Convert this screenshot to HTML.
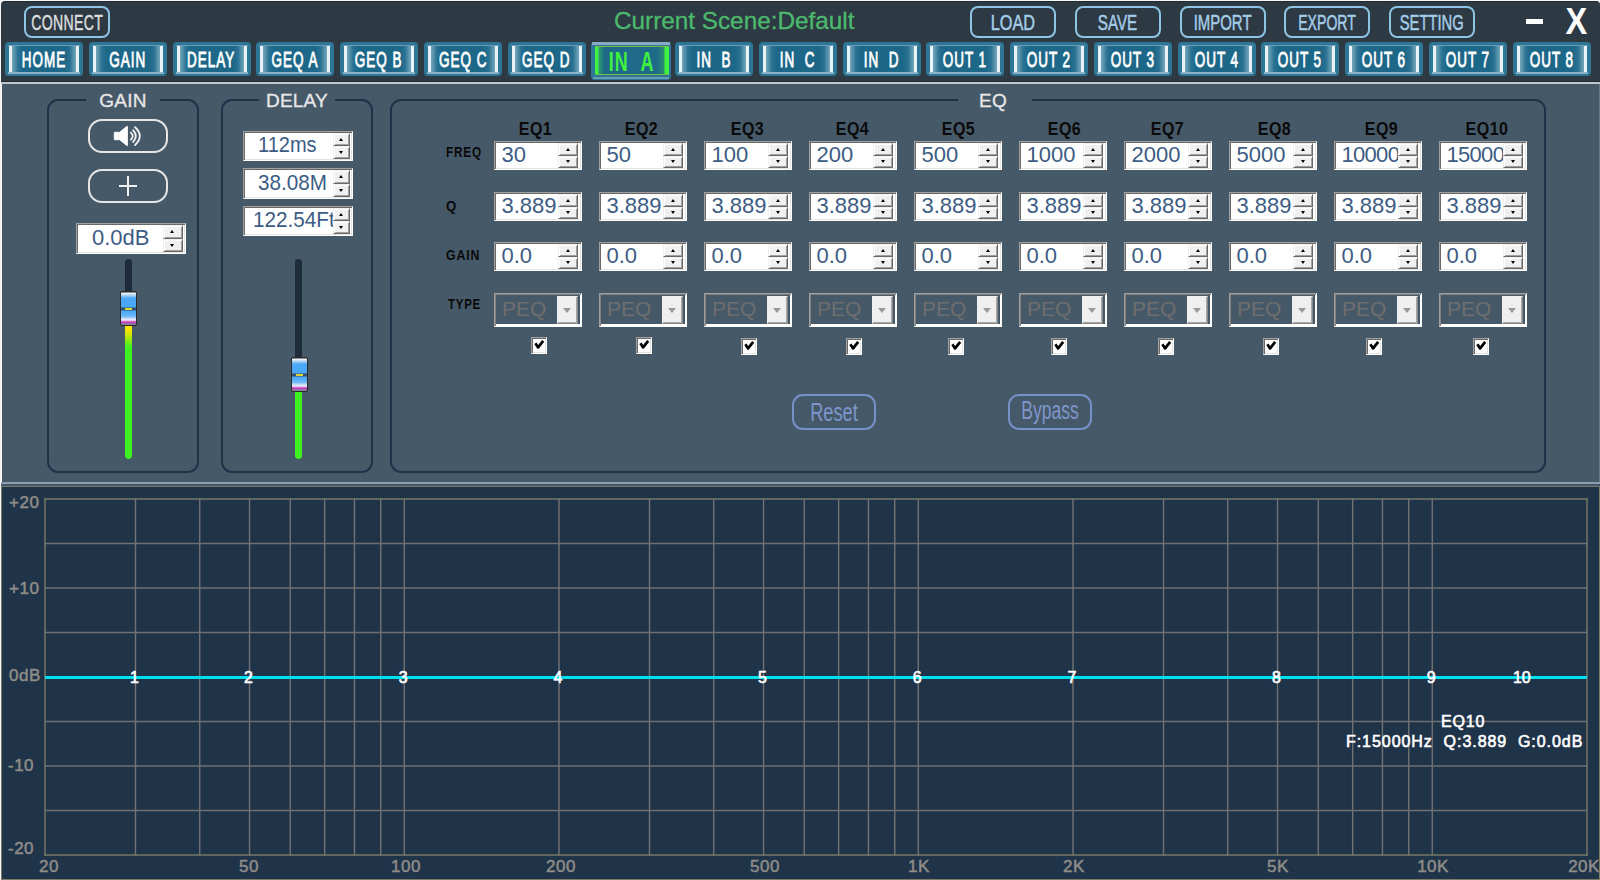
<!DOCTYPE html><html><head><meta charset="utf-8"><style>
*{margin:0;padding:0;box-sizing:border-box}
html,body{width:1600px;height:880px;overflow:hidden;background:#f6f6f6;font-family:"Liberation Sans",sans-serif}
.abs{position:absolute}
#top{position:absolute;left:1px;top:1px;width:1599px;height:81px;background:#2d3943;border-top-left-radius:4px;border-top-right-radius:4px;border-top:1px solid #1f2a33;border-bottom:1px solid #1f2a33}
#sep1{position:absolute;left:1px;top:82px;width:1599px;height:2px;background:#c3c8cc}
#panel{position:absolute;left:2px;top:84px;width:1598px;height:398px;background:#465969;border-right:1px solid #65798a}
#sep2{position:absolute;left:1px;top:482px;width:1599px;height:2px;background:#8e9eac}
#sep3{position:absolute;left:1px;top:484px;width:1599px;height:2px;background:#44566a}
#graph{position:absolute;left:1px;top:486px;width:1599px;height:394px;background:#1f3349;border:1px solid #7a7c68}
.fc{display:flex;justify-content:center;align-items:center;white-space:nowrap}
.sx{display:inline-block;transform-origin:center}
.obtn{position:absolute;top:6px;height:32px;width:86px;border:2px solid #8ec4e4;border-radius:8px;color:#a4cde8;font-size:22px;-webkit-text-stroke:0.5px currentColor}
.tab{position:absolute;top:42px;width:78px;height:34px;border-radius:4px;background:#2e7696;}
.tab .in{position:absolute;left:4px;top:4px;right:4px;bottom:4px;
 background:linear-gradient(to right,#e8f2f6 0,#e8f2f6 2.5px,#78a8bc 3px,#2a7293 9px,#1d6788 14px,#1d6788 calc(100% - 14px),#2a7293 calc(100% - 9px),#78a8bc calc(100% - 3px),#e8f2f6 calc(100% - 2.5px),#e8f2f6 100%);}
.tab .tl{position:absolute;left:3px;right:3px;top:2.5px;height:1.5px;background:#6b9bb7}
.tab .bl{position:absolute;left:3px;right:3px;bottom:2px;height:2px;background:#8cb2c9}
.tab .tx{position:absolute;left:0;right:0;top:1.5px;bottom:0;color:#fff;font-size:22.5px;-webkit-text-stroke:0.9px currentColor;letter-spacing:1.6px}
.tab.act{background:#2e7696;height:38.5px;width:79.5px;top:41.6px}
.tab.act .in{left:3.3px;top:4.8px;right:1.8px;bottom:4.8px;background:linear-gradient(to right,#40f040 0,#40f040 2.5px,#2c9a6c 4.5px,#1e6a88 9px,#1e6a88 calc(100% - 12px),#2a8a70 calc(100% - 5.5px),#40f040 calc(100% - 3.5px),#40f040 100%);box-shadow:inset 0 1px 0 #78b848, inset 0 -1px 0 #78b848}
.tab.act .atl{position:absolute;left:1px;right:1px;top:0.6px;height:2.7px;background:#88aac4}
.tab.act .abl{position:absolute;left:2px;right:2px;top:35.4px;height:1.8px;background:#6a9ab5}
.tab.act .tx{color:#40f040;font-size:28px;left:2px;font-weight:bold;-webkit-text-stroke:0;letter-spacing:1.5px}
.grp{position:absolute;border:2px solid #1d3349;border-radius:11px}
.gt{position:absolute;color:#e8e8e8;font-size:19px;line-height:20px;background:#465969;text-align:center;letter-spacing:0.2px;-webkit-text-stroke:0.3px #e8e8e8}
.spin{position:absolute;background:#fff;border:1px solid;border-color:#a0a0a0 #fff #fff #a0a0a0;box-shadow:inset 1px 1px 0 #696969, inset -1px -1px 0 #e3e3e3;overflow:hidden}
.spin .v{position:absolute;top:-1px;bottom:0;color:#3c5c84;font-size:22px;white-space:nowrap}
.spin .ar{position:absolute;right:3px;width:20px;background:#f0f0f0;border:1px solid;border-color:#f0f0f0 #696969 #696969 #f0f0f0;box-shadow:inset 1px 1px 0 #fff, inset -1px -1px 0 #a0a0a0}
.spin .ar i{position:absolute;left:50%;top:50%;margin-left:-2.5px;width:0;height:0;border-left:2.5px solid transparent;border-right:2.5px solid transparent}
.spin .ar.u i{border-bottom:3px solid #000;margin-top:-1.5px}
.spin .ar.d i{border-top:3px solid #000;margin-top:-1.5px}
.lbl{position:absolute;color:#0a0a0a;font-weight:bold;font-size:14.7px;white-space:nowrap}
.eqh{position:absolute;color:#0a0a0a;font-weight:bold;font-size:18.6px;width:87px}
.wbtn{position:absolute;border:2px solid #e6e6e6;border-radius:14px}
.cb{position:absolute;width:16px;height:17px;background:#fff;border:1px solid;border-color:#a0a0a0 #fff #fff #a0a0a0;box-shadow:inset 1px 1px 0 #696969, inset -1px -1px 0 #e3e3e3}
.gl{position:absolute;background:#77766c}
.axl{position:absolute;color:#8e8c88;font-size:17px;white-space:nowrap;line-height:17px;-webkit-text-stroke:0.5px #8e8c88;letter-spacing:0.5px}
.mk{position:absolute;color:#fff;font-size:16px;line-height:16px;-webkit-text-stroke:0.6px #fff}
.thumb{position:absolute;width:17px;height:35px;border:1px solid #2a2a2a;border-radius:2px;background:linear-gradient(#2a2a2a 0,#2a2a2a 0px,#f4f8fb 1px,#9cc8f0 4px,#4aa8f8 6px,#4aa8f8 15px,#38506a 16px,#38506a 18px,#4aa8f8 19px,#6ab8f8 24px,#f8f0f8 28px,#c040c0 30px,#c040c0 31px,#808890 32px)}
.thumb i{position:absolute;left:4px;top:16px;width:7px;height:2px;background:#e0d830}
</style></head><body>

<div id="top"></div><div id="sep1"></div><div id="panel"></div><div id="sep2"></div><div id="sep3"></div><div id="graph"></div>
<div class="obtn fc" style="left:24px;width:86px;color:#dedede"><span class="sx" style="transform:scaleX(0.64);margin-top:1px;letter-spacing:0.5px">CONNECT</span></div>
<div class="obtn fc" style="left:970.0px"><span class="sx" style="transform:scaleX(0.74);margin-top:1px">LOAD</span></div>
<div class="obtn fc" style="left:1074.8px"><span class="sx" style="transform:scaleX(0.69);margin-top:1px">SAVE</span></div>
<div class="obtn fc" style="left:1179.5px"><span class="sx" style="transform:scaleX(0.68);margin-top:1px">IMPORT</span></div>
<div class="obtn fc" style="left:1284.2px"><span class="sx" style="transform:scaleX(0.64);margin-top:1px">EXPORT</span></div>
<div class="obtn fc" style="left:1389.0px"><span class="sx" style="transform:scaleX(0.67);margin-top:1px">SETTING</span></div>
<div class="abs" style="left:614px;top:7.2px;color:#4cba6c;font-size:24.3px;white-space:nowrap;-webkit-text-stroke:0.3px #4cba6c">Current Scene:Default</div>
<div class="abs" style="left:1526px;top:19px;width:17px;height:5px;background:#fff"></div>
<div class="abs fc" style="left:1556px;top:1px;width:40px;height:42px;color:#fff;font-weight:bold;font-size:37px"><span class="sx" style="transform:scaleX(0.88);margin-left:0px">X</span></div>
<div class="tab" style="left:5.00px"><div class="in"></div><div class="tl"></div><div class="bl"></div><div class="tx fc"><span class="sx" style="transform:scaleX(0.6)">HOME</span></div></div>
<div class="tab" style="left:88.75px"><div class="in"></div><div class="tl"></div><div class="bl"></div><div class="tx fc"><span class="sx" style="transform:scaleX(0.6)">GAIN</span></div></div>
<div class="tab" style="left:172.50px"><div class="in"></div><div class="tl"></div><div class="bl"></div><div class="tx fc"><span class="sx" style="transform:scaleX(0.6)">DELAY</span></div></div>
<div class="tab" style="left:256.25px"><div class="in"></div><div class="tl"></div><div class="bl"></div><div class="tx fc"><span class="sx" style="transform:scaleX(0.6)">GEQ A</span></div></div>
<div class="tab" style="left:340.00px"><div class="in"></div><div class="tl"></div><div class="bl"></div><div class="tx fc"><span class="sx" style="transform:scaleX(0.6)">GEQ B</span></div></div>
<div class="tab" style="left:423.75px"><div class="in"></div><div class="tl"></div><div class="bl"></div><div class="tx fc"><span class="sx" style="transform:scaleX(0.6)">GEQ C</span></div></div>
<div class="tab" style="left:507.50px"><div class="in"></div><div class="tl"></div><div class="bl"></div><div class="tx fc"><span class="sx" style="transform:scaleX(0.6)">GEQ D</span></div></div>
<div class="tab act" style="left:591.25px"><div class="in"></div><div class="atl"></div><div class="abl"></div><div class="tx fc"><span class="sx" style="transform:scaleX(0.64)">IN&nbsp;&nbsp;A</span></div></div>
<div class="tab" style="left:675.00px"><div class="in"></div><div class="tl"></div><div class="bl"></div><div class="tx fc"><span class="sx" style="transform:scaleX(0.6)">IN&nbsp;&nbsp;B</span></div></div>
<div class="tab" style="left:758.75px"><div class="in"></div><div class="tl"></div><div class="bl"></div><div class="tx fc"><span class="sx" style="transform:scaleX(0.6)">IN&nbsp;&nbsp;C</span></div></div>
<div class="tab" style="left:842.50px"><div class="in"></div><div class="tl"></div><div class="bl"></div><div class="tx fc"><span class="sx" style="transform:scaleX(0.6)">IN&nbsp;&nbsp;D</span></div></div>
<div class="tab" style="left:926.25px"><div class="in"></div><div class="tl"></div><div class="bl"></div><div class="tx fc"><span class="sx" style="transform:scaleX(0.6)">OUT 1</span></div></div>
<div class="tab" style="left:1010.00px"><div class="in"></div><div class="tl"></div><div class="bl"></div><div class="tx fc"><span class="sx" style="transform:scaleX(0.6)">OUT 2</span></div></div>
<div class="tab" style="left:1093.75px"><div class="in"></div><div class="tl"></div><div class="bl"></div><div class="tx fc"><span class="sx" style="transform:scaleX(0.6)">OUT 3</span></div></div>
<div class="tab" style="left:1177.50px"><div class="in"></div><div class="tl"></div><div class="bl"></div><div class="tx fc"><span class="sx" style="transform:scaleX(0.6)">OUT 4</span></div></div>
<div class="tab" style="left:1261.25px"><div class="in"></div><div class="tl"></div><div class="bl"></div><div class="tx fc"><span class="sx" style="transform:scaleX(0.6)">OUT 5</span></div></div>
<div class="tab" style="left:1345.00px"><div class="in"></div><div class="tl"></div><div class="bl"></div><div class="tx fc"><span class="sx" style="transform:scaleX(0.6)">OUT 6</span></div></div>
<div class="tab" style="left:1428.75px"><div class="in"></div><div class="tl"></div><div class="bl"></div><div class="tx fc"><span class="sx" style="transform:scaleX(0.6)">OUT 7</span></div></div>
<div class="tab" style="left:1512.50px"><div class="in"></div><div class="tl"></div><div class="bl"></div><div class="tx fc"><span class="sx" style="transform:scaleX(0.6)">OUT 8</span></div></div>
<div class="grp" style="left:47.4px;top:99px;width:151.6px;height:374px"></div>
<div class="gt" style="left:86px;top:90.5px;width:74px">GAIN</div>
<div class="grp" style="left:221px;top:99px;width:152px;height:374px"></div>
<div class="gt" style="left:259px;top:90.5px;width:76px">DELAY</div>
<div class="grp" style="left:390px;top:99px;width:1156px;height:374px"></div>
<div class="gt" style="left:958px;top:90.5px;width:74px;text-indent:-4px">EQ</div>
<div class="wbtn" style="left:88px;top:119px;width:80px;height:34px"></div>
<svg class="abs" style="left:105px;top:120px" width="45" height="32" viewBox="0 0 45 32"><path d="M9.3 12.3H14.6L21.9 6.3Q22.4 6 22.4 6.8V25.2Q22.4 26 21.9 25.6L14.6 19.7H9.3Z" fill="#fff" stroke="#fff" stroke-width="0.9" stroke-linejoin="round"/><path d="M25.9 12.6Q29.5 16 25.9 19.6M28.1 10.2Q33.5 16 28.1 21.9M30.1 7.2Q39.5 16 30.1 25" stroke="#eef0f2" stroke-width="1.9" fill="none" stroke-linecap="round"/></svg>
<div class="wbtn" style="left:88px;top:169px;width:80px;height:34px"></div>
<div class="abs" style="left:118.5px;top:185px;width:18.5px;height:2.2px;background:#f0f0f0"></div><div class="abs" style="left:126.8px;top:176px;width:2.2px;height:20px;background:#f0f0f0"></div>
<div class="spin" style="left:76px;top:223px;width:110px;height:31px"><div class="v" style="left:15px;line-height:29px">0.0dB</div><div class="ar u" style="top:1px;height:13.5px;width:19.5px;right:2.5px"><i></i></div><div class="ar d" style="top:14.5px;height:13.5px;width:19.5px;right:2.5px"><i></i></div></div>
<div class="spin" style="left:243px;top:131px;width:110px;height:30px"><div class="v" style="left:14px;line-height:28px;transform:scaleX(0.91);transform-origin:left">112ms</div><div class="ar u" style="top:1px;height:13.0px;width:17.5px;right:2px"><i></i></div><div class="ar d" style="top:14.0px;height:13.0px;width:17.5px;right:2px"><i></i></div></div>
<div class="spin" style="left:243px;top:168px;width:110px;height:31px"><div class="v" style="left:14px;line-height:29px;transform:scaleX(0.94);transform-origin:left">38.08M</div><div class="ar u" style="top:1px;height:13.5px;width:17.5px;right:2px"><i></i></div><div class="ar d" style="top:14.5px;height:13.5px;width:17.5px;right:2px"><i></i></div></div>
<div class="spin" style="left:243px;top:206px;width:110px;height:30px"><div class="v" style="left:9px;line-height:28px;transform:scaleX(0.94);transform-origin:left">122.54Ft</div><div class="ar u" style="top:1px;height:13.0px;width:17.5px;right:2px"><i></i></div><div class="ar d" style="top:14.0px;height:13.0px;width:17.5px;right:2px"><i></i></div></div>
<div class="abs" style="left:125px;top:259px;width:7px;height:200px;background:#1e2b3a;border-radius:3.5px"></div>
<div class="abs" style="left:125px;top:325px;width:7px;height:134px;background:linear-gradient(#f8e400 0,#f8e400 6px,#40f020 22px,#40f020);border-radius:0 0 3.5px 3.5px"></div>
<div class="thumb" style="left:120px;top:291px"><i></i></div>
<div class="abs" style="left:295px;top:259px;width:7px;height:200px;background:#1e2b3a;border-radius:3.5px"></div>
<div class="abs" style="left:295px;top:390px;width:7px;height:69px;background:#40f020;border-radius:0 0 3.5px 3.5px"></div>
<div class="thumb" style="left:291px;top:357px"><i></i></div>
<div class="lbl" style="left:445.5px;top:144px"><span class="sx" style="transform:scaleX(0.8);transform-origin:left;letter-spacing:1px">FREQ</span></div>
<div class="lbl" style="left:445.5px;top:198px"><span class="sx" style="transform:scaleX(0.9);transform-origin:left;letter-spacing:1px">Q</span></div>
<div class="lbl" style="left:445.5px;top:246.5px"><span class="sx" style="transform:scaleX(0.84);transform-origin:left;letter-spacing:1px">GAIN</span></div>
<div class="lbl" style="left:447.5px;top:295.5px"><span class="sx" style="transform:scaleX(0.78);transform-origin:left;letter-spacing:1px">TYPE</span></div>
<div class="eqh fc" style="left:492.5px;top:119px;height:20px"><span class="sx" style="transform:scaleX(0.86);letter-spacing:0.6px">EQ1</span></div>
<div class="spin" style="left:494px;top:141px;width:88px;height:29px"><div class="v" style="left:6.5px;line-height:27px">30</div><div class="ar u" style="top:1px;height:12.5px;width:20px;right:3px"><i></i></div><div class="ar d" style="top:13.5px;height:12.5px;width:20px;right:3px"><i></i></div></div>
<div class="spin" style="left:494px;top:192px;width:88px;height:29px"><div class="v" style="left:6.5px;line-height:27px">3.889</div><div class="ar u" style="top:1px;height:12.5px;width:20px;right:3px"><i></i></div><div class="ar d" style="top:13.5px;height:12.5px;width:20px;right:3px"><i></i></div></div>
<div class="spin" style="left:494px;top:242px;width:88px;height:29px"><div class="v" style="left:6.5px;line-height:27px">0.0</div><div class="ar u" style="top:1px;height:12.5px;width:20px;right:3px"><i></i></div><div class="ar d" style="top:13.5px;height:12.5px;width:20px;right:3px"><i></i></div></div>
<div class="abs" style="left:494px;top:293px;width:88px;height:34px;border:1px solid;border-color:#a0a0a0 #fff #fff #a0a0a0;box-shadow:inset 1px 1px 0 #808080, inset -1px -1px 0 #fff, inset 0 -2px 0 #fff"><div class="abs" style="left:7px;top:0.5px;color:#6e6e6e;font-size:21px;line-height:28px">PEQ</div><div class="abs" style="left:62px;top:2px;width:21px;height:28px;background:#efefef;border:1px solid;border-color:#efefef #888 #888 #efefef;box-shadow:inset -1px -1px 0 #a8a8a8"></div><div class="abs" style="left:68px;top:14px;width:0;height:0;border-left:4.5px solid transparent;border-right:4.5px solid transparent;border-top:5px solid #9a9a9a"></div></div>
<div class="cb" style="left:531px;top:337px"></div>
<svg class="abs" style="left:531px;top:337px" width="16" height="17"><path d="M4.4 6.2L7.1 10.4L12.2 3.8" stroke="#000" stroke-width="2.7" fill="none" stroke-linejoin="round"/></svg>
<div class="eqh fc" style="left:597.9px;top:119px;height:20px"><span class="sx" style="transform:scaleX(0.86);letter-spacing:0.6px">EQ2</span></div>
<div class="spin" style="left:599px;top:141px;width:88px;height:29px"><div class="v" style="left:6.5px;line-height:27px">50</div><div class="ar u" style="top:1px;height:12.5px;width:20px;right:3px"><i></i></div><div class="ar d" style="top:13.5px;height:12.5px;width:20px;right:3px"><i></i></div></div>
<div class="spin" style="left:599px;top:192px;width:88px;height:29px"><div class="v" style="left:6.5px;line-height:27px">3.889</div><div class="ar u" style="top:1px;height:12.5px;width:20px;right:3px"><i></i></div><div class="ar d" style="top:13.5px;height:12.5px;width:20px;right:3px"><i></i></div></div>
<div class="spin" style="left:599px;top:242px;width:88px;height:29px"><div class="v" style="left:6.5px;line-height:27px">0.0</div><div class="ar u" style="top:1px;height:12.5px;width:20px;right:3px"><i></i></div><div class="ar d" style="top:13.5px;height:12.5px;width:20px;right:3px"><i></i></div></div>
<div class="abs" style="left:599px;top:293px;width:88px;height:34px;border:1px solid;border-color:#a0a0a0 #fff #fff #a0a0a0;box-shadow:inset 1px 1px 0 #808080, inset -1px -1px 0 #fff, inset 0 -2px 0 #fff"><div class="abs" style="left:7px;top:0.5px;color:#6e6e6e;font-size:21px;line-height:28px">PEQ</div><div class="abs" style="left:62px;top:2px;width:21px;height:28px;background:#efefef;border:1px solid;border-color:#efefef #888 #888 #efefef;box-shadow:inset -1px -1px 0 #a8a8a8"></div><div class="abs" style="left:68px;top:14px;width:0;height:0;border-left:4.5px solid transparent;border-right:4.5px solid transparent;border-top:5px solid #9a9a9a"></div></div>
<div class="cb" style="left:636px;top:337px"></div>
<svg class="abs" style="left:636px;top:337px" width="16" height="17"><path d="M4.4 6.2L7.1 10.4L12.2 3.8" stroke="#000" stroke-width="2.7" fill="none" stroke-linejoin="round"/></svg>
<div class="eqh fc" style="left:704.1px;top:119px;height:20px"><span class="sx" style="transform:scaleX(0.86);letter-spacing:0.6px">EQ3</span></div>
<div class="spin" style="left:704px;top:141px;width:88px;height:29px"><div class="v" style="left:6.5px;line-height:27px">100</div><div class="ar u" style="top:1px;height:12.5px;width:20px;right:3px"><i></i></div><div class="ar d" style="top:13.5px;height:12.5px;width:20px;right:3px"><i></i></div></div>
<div class="spin" style="left:704px;top:192px;width:88px;height:29px"><div class="v" style="left:6.5px;line-height:27px">3.889</div><div class="ar u" style="top:1px;height:12.5px;width:20px;right:3px"><i></i></div><div class="ar d" style="top:13.5px;height:12.5px;width:20px;right:3px"><i></i></div></div>
<div class="spin" style="left:704px;top:242px;width:88px;height:29px"><div class="v" style="left:6.5px;line-height:27px">0.0</div><div class="ar u" style="top:1px;height:12.5px;width:20px;right:3px"><i></i></div><div class="ar d" style="top:13.5px;height:12.5px;width:20px;right:3px"><i></i></div></div>
<div class="abs" style="left:704px;top:293px;width:88px;height:34px;border:1px solid;border-color:#a0a0a0 #fff #fff #a0a0a0;box-shadow:inset 1px 1px 0 #808080, inset -1px -1px 0 #fff, inset 0 -2px 0 #fff"><div class="abs" style="left:7px;top:0.5px;color:#6e6e6e;font-size:21px;line-height:28px">PEQ</div><div class="abs" style="left:62px;top:2px;width:21px;height:28px;background:#efefef;border:1px solid;border-color:#efefef #888 #888 #efefef;box-shadow:inset -1px -1px 0 #a8a8a8"></div><div class="abs" style="left:68px;top:14px;width:0;height:0;border-left:4.5px solid transparent;border-right:4.5px solid transparent;border-top:5px solid #9a9a9a"></div></div>
<div class="cb" style="left:741px;top:338px"></div>
<svg class="abs" style="left:741px;top:338px" width="16" height="17"><path d="M4.4 6.2L7.1 10.4L12.2 3.8" stroke="#000" stroke-width="2.7" fill="none" stroke-linejoin="round"/></svg>
<div class="eqh fc" style="left:808.9px;top:119px;height:20px"><span class="sx" style="transform:scaleX(0.86);letter-spacing:0.6px">EQ4</span></div>
<div class="spin" style="left:809px;top:141px;width:88px;height:29px"><div class="v" style="left:6.5px;line-height:27px">200</div><div class="ar u" style="top:1px;height:12.5px;width:20px;right:3px"><i></i></div><div class="ar d" style="top:13.5px;height:12.5px;width:20px;right:3px"><i></i></div></div>
<div class="spin" style="left:809px;top:192px;width:88px;height:29px"><div class="v" style="left:6.5px;line-height:27px">3.889</div><div class="ar u" style="top:1px;height:12.5px;width:20px;right:3px"><i></i></div><div class="ar d" style="top:13.5px;height:12.5px;width:20px;right:3px"><i></i></div></div>
<div class="spin" style="left:809px;top:242px;width:88px;height:29px"><div class="v" style="left:6.5px;line-height:27px">0.0</div><div class="ar u" style="top:1px;height:12.5px;width:20px;right:3px"><i></i></div><div class="ar d" style="top:13.5px;height:12.5px;width:20px;right:3px"><i></i></div></div>
<div class="abs" style="left:809px;top:293px;width:88px;height:34px;border:1px solid;border-color:#a0a0a0 #fff #fff #a0a0a0;box-shadow:inset 1px 1px 0 #808080, inset -1px -1px 0 #fff, inset 0 -2px 0 #fff"><div class="abs" style="left:7px;top:0.5px;color:#6e6e6e;font-size:21px;line-height:28px">PEQ</div><div class="abs" style="left:62px;top:2px;width:21px;height:28px;background:#efefef;border:1px solid;border-color:#efefef #888 #888 #efefef;box-shadow:inset -1px -1px 0 #a8a8a8"></div><div class="abs" style="left:68px;top:14px;width:0;height:0;border-left:4.5px solid transparent;border-right:4.5px solid transparent;border-top:5px solid #9a9a9a"></div></div>
<div class="cb" style="left:846px;top:338px"></div>
<svg class="abs" style="left:846px;top:338px" width="16" height="17"><path d="M4.4 6.2L7.1 10.4L12.2 3.8" stroke="#000" stroke-width="2.7" fill="none" stroke-linejoin="round"/></svg>
<div class="eqh fc" style="left:915.1px;top:119px;height:20px"><span class="sx" style="transform:scaleX(0.86);letter-spacing:0.6px">EQ5</span></div>
<div class="spin" style="left:914px;top:141px;width:88px;height:29px"><div class="v" style="left:6.5px;line-height:27px">500</div><div class="ar u" style="top:1px;height:12.5px;width:20px;right:3px"><i></i></div><div class="ar d" style="top:13.5px;height:12.5px;width:20px;right:3px"><i></i></div></div>
<div class="spin" style="left:914px;top:192px;width:88px;height:29px"><div class="v" style="left:6.5px;line-height:27px">3.889</div><div class="ar u" style="top:1px;height:12.5px;width:20px;right:3px"><i></i></div><div class="ar d" style="top:13.5px;height:12.5px;width:20px;right:3px"><i></i></div></div>
<div class="spin" style="left:914px;top:242px;width:88px;height:29px"><div class="v" style="left:6.5px;line-height:27px">0.0</div><div class="ar u" style="top:1px;height:12.5px;width:20px;right:3px"><i></i></div><div class="ar d" style="top:13.5px;height:12.5px;width:20px;right:3px"><i></i></div></div>
<div class="abs" style="left:914px;top:293px;width:88px;height:34px;border:1px solid;border-color:#a0a0a0 #fff #fff #a0a0a0;box-shadow:inset 1px 1px 0 #808080, inset -1px -1px 0 #fff, inset 0 -2px 0 #fff"><div class="abs" style="left:7px;top:0.5px;color:#6e6e6e;font-size:21px;line-height:28px">PEQ</div><div class="abs" style="left:62px;top:2px;width:21px;height:28px;background:#efefef;border:1px solid;border-color:#efefef #888 #888 #efefef;box-shadow:inset -1px -1px 0 #a8a8a8"></div><div class="abs" style="left:68px;top:14px;width:0;height:0;border-left:4.5px solid transparent;border-right:4.5px solid transparent;border-top:5px solid #9a9a9a"></div></div>
<div class="cb" style="left:948px;top:338px"></div>
<svg class="abs" style="left:948px;top:338px" width="16" height="17"><path d="M4.4 6.2L7.1 10.4L12.2 3.8" stroke="#000" stroke-width="2.7" fill="none" stroke-linejoin="round"/></svg>
<div class="eqh fc" style="left:1021.2px;top:119px;height:20px"><span class="sx" style="transform:scaleX(0.86);letter-spacing:0.6px">EQ6</span></div>
<div class="spin" style="left:1019px;top:141px;width:88px;height:29px"><div class="v" style="left:6.5px;line-height:27px">1000</div><div class="ar u" style="top:1px;height:12.5px;width:20px;right:3px"><i></i></div><div class="ar d" style="top:13.5px;height:12.5px;width:20px;right:3px"><i></i></div></div>
<div class="spin" style="left:1019px;top:192px;width:88px;height:29px"><div class="v" style="left:6.5px;line-height:27px">3.889</div><div class="ar u" style="top:1px;height:12.5px;width:20px;right:3px"><i></i></div><div class="ar d" style="top:13.5px;height:12.5px;width:20px;right:3px"><i></i></div></div>
<div class="spin" style="left:1019px;top:242px;width:88px;height:29px"><div class="v" style="left:6.5px;line-height:27px">0.0</div><div class="ar u" style="top:1px;height:12.5px;width:20px;right:3px"><i></i></div><div class="ar d" style="top:13.5px;height:12.5px;width:20px;right:3px"><i></i></div></div>
<div class="abs" style="left:1019px;top:293px;width:88px;height:34px;border:1px solid;border-color:#a0a0a0 #fff #fff #a0a0a0;box-shadow:inset 1px 1px 0 #808080, inset -1px -1px 0 #fff, inset 0 -2px 0 #fff"><div class="abs" style="left:7px;top:0.5px;color:#6e6e6e;font-size:21px;line-height:28px">PEQ</div><div class="abs" style="left:62px;top:2px;width:21px;height:28px;background:#efefef;border:1px solid;border-color:#efefef #888 #888 #efefef;box-shadow:inset -1px -1px 0 #a8a8a8"></div><div class="abs" style="left:68px;top:14px;width:0;height:0;border-left:4.5px solid transparent;border-right:4.5px solid transparent;border-top:5px solid #9a9a9a"></div></div>
<div class="cb" style="left:1051px;top:338px"></div>
<svg class="abs" style="left:1051px;top:338px" width="16" height="17"><path d="M4.4 6.2L7.1 10.4L12.2 3.8" stroke="#000" stroke-width="2.7" fill="none" stroke-linejoin="round"/></svg>
<div class="eqh fc" style="left:1123.9px;top:119px;height:20px"><span class="sx" style="transform:scaleX(0.86);letter-spacing:0.6px">EQ7</span></div>
<div class="spin" style="left:1124px;top:141px;width:88px;height:29px"><div class="v" style="left:6.5px;line-height:27px">2000</div><div class="ar u" style="top:1px;height:12.5px;width:20px;right:3px"><i></i></div><div class="ar d" style="top:13.5px;height:12.5px;width:20px;right:3px"><i></i></div></div>
<div class="spin" style="left:1124px;top:192px;width:88px;height:29px"><div class="v" style="left:6.5px;line-height:27px">3.889</div><div class="ar u" style="top:1px;height:12.5px;width:20px;right:3px"><i></i></div><div class="ar d" style="top:13.5px;height:12.5px;width:20px;right:3px"><i></i></div></div>
<div class="spin" style="left:1124px;top:242px;width:88px;height:29px"><div class="v" style="left:6.5px;line-height:27px">0.0</div><div class="ar u" style="top:1px;height:12.5px;width:20px;right:3px"><i></i></div><div class="ar d" style="top:13.5px;height:12.5px;width:20px;right:3px"><i></i></div></div>
<div class="abs" style="left:1124px;top:293px;width:88px;height:34px;border:1px solid;border-color:#a0a0a0 #fff #fff #a0a0a0;box-shadow:inset 1px 1px 0 #808080, inset -1px -1px 0 #fff, inset 0 -2px 0 #fff"><div class="abs" style="left:7px;top:0.5px;color:#6e6e6e;font-size:21px;line-height:28px">PEQ</div><div class="abs" style="left:62px;top:2px;width:21px;height:28px;background:#efefef;border:1px solid;border-color:#efefef #888 #888 #efefef;box-shadow:inset -1px -1px 0 #a8a8a8"></div><div class="abs" style="left:68px;top:14px;width:0;height:0;border-left:4.5px solid transparent;border-right:4.5px solid transparent;border-top:5px solid #9a9a9a"></div></div>
<div class="cb" style="left:1158px;top:338px"></div>
<svg class="abs" style="left:1158px;top:338px" width="16" height="17"><path d="M4.4 6.2L7.1 10.4L12.2 3.8" stroke="#000" stroke-width="2.7" fill="none" stroke-linejoin="round"/></svg>
<div class="eqh fc" style="left:1230.8px;top:119px;height:20px"><span class="sx" style="transform:scaleX(0.86);letter-spacing:0.6px">EQ8</span></div>
<div class="spin" style="left:1229px;top:141px;width:88px;height:29px"><div class="v" style="left:6.5px;line-height:27px">5000</div><div class="ar u" style="top:1px;height:12.5px;width:20px;right:3px"><i></i></div><div class="ar d" style="top:13.5px;height:12.5px;width:20px;right:3px"><i></i></div></div>
<div class="spin" style="left:1229px;top:192px;width:88px;height:29px"><div class="v" style="left:6.5px;line-height:27px">3.889</div><div class="ar u" style="top:1px;height:12.5px;width:20px;right:3px"><i></i></div><div class="ar d" style="top:13.5px;height:12.5px;width:20px;right:3px"><i></i></div></div>
<div class="spin" style="left:1229px;top:242px;width:88px;height:29px"><div class="v" style="left:6.5px;line-height:27px">0.0</div><div class="ar u" style="top:1px;height:12.5px;width:20px;right:3px"><i></i></div><div class="ar d" style="top:13.5px;height:12.5px;width:20px;right:3px"><i></i></div></div>
<div class="abs" style="left:1229px;top:293px;width:88px;height:34px;border:1px solid;border-color:#a0a0a0 #fff #fff #a0a0a0;box-shadow:inset 1px 1px 0 #808080, inset -1px -1px 0 #fff, inset 0 -2px 0 #fff"><div class="abs" style="left:7px;top:0.5px;color:#6e6e6e;font-size:21px;line-height:28px">PEQ</div><div class="abs" style="left:62px;top:2px;width:21px;height:28px;background:#efefef;border:1px solid;border-color:#efefef #888 #888 #efefef;box-shadow:inset -1px -1px 0 #a8a8a8"></div><div class="abs" style="left:68px;top:14px;width:0;height:0;border-left:4.5px solid transparent;border-right:4.5px solid transparent;border-top:5px solid #9a9a9a"></div></div>
<div class="cb" style="left:1263px;top:338px"></div>
<svg class="abs" style="left:1263px;top:338px" width="16" height="17"><path d="M4.4 6.2L7.1 10.4L12.2 3.8" stroke="#000" stroke-width="2.7" fill="none" stroke-linejoin="round"/></svg>
<div class="eqh fc" style="left:1337.9px;top:119px;height:20px"><span class="sx" style="transform:scaleX(0.86);letter-spacing:0.6px">EQ9</span></div>
<div class="spin" style="left:1334px;top:141px;width:88px;height:29px"><div class="v" style="left:6.5px;line-height:27px"><span style="letter-spacing:-0.7px">10000</span></div><div class="ar u" style="top:1px;height:12.5px;width:20px;right:3px"><i></i></div><div class="ar d" style="top:13.5px;height:12.5px;width:20px;right:3px"><i></i></div></div>
<div class="spin" style="left:1334px;top:192px;width:88px;height:29px"><div class="v" style="left:6.5px;line-height:27px">3.889</div><div class="ar u" style="top:1px;height:12.5px;width:20px;right:3px"><i></i></div><div class="ar d" style="top:13.5px;height:12.5px;width:20px;right:3px"><i></i></div></div>
<div class="spin" style="left:1334px;top:242px;width:88px;height:29px"><div class="v" style="left:6.5px;line-height:27px">0.0</div><div class="ar u" style="top:1px;height:12.5px;width:20px;right:3px"><i></i></div><div class="ar d" style="top:13.5px;height:12.5px;width:20px;right:3px"><i></i></div></div>
<div class="abs" style="left:1334px;top:293px;width:88px;height:34px;border:1px solid;border-color:#a0a0a0 #fff #fff #a0a0a0;box-shadow:inset 1px 1px 0 #808080, inset -1px -1px 0 #fff, inset 0 -2px 0 #fff"><div class="abs" style="left:7px;top:0.5px;color:#6e6e6e;font-size:21px;line-height:28px">PEQ</div><div class="abs" style="left:62px;top:2px;width:21px;height:28px;background:#efefef;border:1px solid;border-color:#efefef #888 #888 #efefef;box-shadow:inset -1px -1px 0 #a8a8a8"></div><div class="abs" style="left:68px;top:14px;width:0;height:0;border-left:4.5px solid transparent;border-right:4.5px solid transparent;border-top:5px solid #9a9a9a"></div></div>
<div class="cb" style="left:1366px;top:338px"></div>
<svg class="abs" style="left:1366px;top:338px" width="16" height="17"><path d="M4.4 6.2L7.1 10.4L12.2 3.8" stroke="#000" stroke-width="2.7" fill="none" stroke-linejoin="round"/></svg>
<div class="eqh fc" style="left:1443.5px;top:119px;height:20px"><span class="sx" style="transform:scaleX(0.86);letter-spacing:0.6px">EQ10</span></div>
<div class="spin" style="left:1439px;top:141px;width:88px;height:29px"><div class="v" style="left:6.5px;line-height:27px"><span style="letter-spacing:-0.7px">15000</span></div><div class="ar u" style="top:1px;height:12.5px;width:20px;right:3px"><i></i></div><div class="ar d" style="top:13.5px;height:12.5px;width:20px;right:3px"><i></i></div></div>
<div class="spin" style="left:1439px;top:192px;width:88px;height:29px"><div class="v" style="left:6.5px;line-height:27px">3.889</div><div class="ar u" style="top:1px;height:12.5px;width:20px;right:3px"><i></i></div><div class="ar d" style="top:13.5px;height:12.5px;width:20px;right:3px"><i></i></div></div>
<div class="spin" style="left:1439px;top:242px;width:88px;height:29px"><div class="v" style="left:6.5px;line-height:27px">0.0</div><div class="ar u" style="top:1px;height:12.5px;width:20px;right:3px"><i></i></div><div class="ar d" style="top:13.5px;height:12.5px;width:20px;right:3px"><i></i></div></div>
<div class="abs" style="left:1439px;top:293px;width:88px;height:34px;border:1px solid;border-color:#a0a0a0 #fff #fff #a0a0a0;box-shadow:inset 1px 1px 0 #808080, inset -1px -1px 0 #fff, inset 0 -2px 0 #fff"><div class="abs" style="left:7px;top:0.5px;color:#6e6e6e;font-size:21px;line-height:28px">PEQ</div><div class="abs" style="left:62px;top:2px;width:21px;height:28px;background:#efefef;border:1px solid;border-color:#efefef #888 #888 #efefef;box-shadow:inset -1px -1px 0 #a8a8a8"></div><div class="abs" style="left:68px;top:14px;width:0;height:0;border-left:4.5px solid transparent;border-right:4.5px solid transparent;border-top:5px solid #9a9a9a"></div></div>
<div class="cb" style="left:1473px;top:338px"></div>
<svg class="abs" style="left:1473px;top:338px" width="16" height="17"><path d="M4.4 6.2L7.1 10.4L12.2 3.8" stroke="#000" stroke-width="2.7" fill="none" stroke-linejoin="round"/></svg>
<div class="abs fc" style="left:792px;top:394px;width:84px;height:36px;border:2px solid #7890c8;border-radius:11px;color:#7e96cc;font-size:26px"><span class="sx" style="transform:scaleX(0.70);margin-top:1px">Reset</span></div>
<div class="abs fc" style="left:1008px;top:394px;width:84px;height:36px;border:2px solid #7890c8;border-radius:11px;color:#7e96cc;font-size:25px"><span class="sx" style="transform:scaleX(0.70);margin-top:-3px">Bypass</span></div>
<svg class="abs" style="left:0;top:0" width="1600" height="880" shape-rendering="geometricPrecision"><line x1="45.00" y1="498.3" x2="45.00" y2="855.7" stroke="#7a7c66" stroke-width="1.4"/><line x1="135.51" y1="498.3" x2="135.51" y2="855.7" stroke="#737373" stroke-width="1.4"/><line x1="199.73" y1="498.3" x2="199.73" y2="855.7" stroke="#737373" stroke-width="1.4"/><line x1="249.54" y1="498.3" x2="249.54" y2="855.7" stroke="#737373" stroke-width="1.4"/><line x1="290.24" y1="498.3" x2="290.24" y2="855.7" stroke="#737373" stroke-width="1.4"/><line x1="324.65" y1="498.3" x2="324.65" y2="855.7" stroke="#737373" stroke-width="1.4"/><line x1="354.46" y1="498.3" x2="354.46" y2="855.7" stroke="#737373" stroke-width="1.4"/><line x1="380.75" y1="498.3" x2="380.75" y2="855.7" stroke="#737373" stroke-width="1.4"/><line x1="404.27" y1="498.3" x2="404.27" y2="855.7" stroke="#737373" stroke-width="1.4"/><line x1="559.00" y1="498.3" x2="559.00" y2="855.7" stroke="#737373" stroke-width="1.4"/><line x1="649.51" y1="498.3" x2="649.51" y2="855.7" stroke="#737373" stroke-width="1.4"/><line x1="713.73" y1="498.3" x2="713.73" y2="855.7" stroke="#737373" stroke-width="1.4"/><line x1="763.54" y1="498.3" x2="763.54" y2="855.7" stroke="#737373" stroke-width="1.4"/><line x1="804.24" y1="498.3" x2="804.24" y2="855.7" stroke="#737373" stroke-width="1.4"/><line x1="838.65" y1="498.3" x2="838.65" y2="855.7" stroke="#737373" stroke-width="1.4"/><line x1="868.46" y1="498.3" x2="868.46" y2="855.7" stroke="#737373" stroke-width="1.4"/><line x1="894.75" y1="498.3" x2="894.75" y2="855.7" stroke="#737373" stroke-width="1.4"/><line x1="918.27" y1="498.3" x2="918.27" y2="855.7" stroke="#737373" stroke-width="1.4"/><line x1="1073.00" y1="498.3" x2="1073.00" y2="855.7" stroke="#737373" stroke-width="1.4"/><line x1="1163.51" y1="498.3" x2="1163.51" y2="855.7" stroke="#737373" stroke-width="1.4"/><line x1="1227.73" y1="498.3" x2="1227.73" y2="855.7" stroke="#737373" stroke-width="1.4"/><line x1="1277.54" y1="498.3" x2="1277.54" y2="855.7" stroke="#737373" stroke-width="1.4"/><line x1="1318.24" y1="498.3" x2="1318.24" y2="855.7" stroke="#737373" stroke-width="1.4"/><line x1="1352.65" y1="498.3" x2="1352.65" y2="855.7" stroke="#737373" stroke-width="1.4"/><line x1="1382.46" y1="498.3" x2="1382.46" y2="855.7" stroke="#737373" stroke-width="1.4"/><line x1="1408.75" y1="498.3" x2="1408.75" y2="855.7" stroke="#737373" stroke-width="1.4"/><line x1="1432.27" y1="498.3" x2="1432.27" y2="855.7" stroke="#737373" stroke-width="1.4"/><line x1="1587.00" y1="498.3" x2="1587.00" y2="855.7" stroke="#7a7c66" stroke-width="1.4"/><line x1="44.3" y1="499.00" x2="1587.7" y2="499.00" stroke="#767a66" stroke-width="1.4"/><line x1="44.3" y1="543.50" x2="1587.7" y2="543.50" stroke="#707070" stroke-width="1.4"/><line x1="44.3" y1="588.00" x2="1587.7" y2="588.00" stroke="#707070" stroke-width="1.4"/><line x1="44.3" y1="632.50" x2="1587.7" y2="632.50" stroke="#707070" stroke-width="1.4"/><line x1="44.3" y1="677.00" x2="1587.7" y2="677.00" stroke="#707070" stroke-width="1.4"/><line x1="44.3" y1="721.50" x2="1587.7" y2="721.50" stroke="#707070" stroke-width="1.4"/><line x1="44.3" y1="766.00" x2="1587.7" y2="766.00" stroke="#707070" stroke-width="1.4"/><line x1="44.3" y1="810.50" x2="1587.7" y2="810.50" stroke="#707070" stroke-width="1.4"/><line x1="44.3" y1="855.00" x2="1587.7" y2="855.00" stroke="#767a66" stroke-width="1.4"/></svg>
<div class="abs" style="left:45px;top:676px;width:1542px;height:3px;background:#00e0ee"></div>
<div class="axl" style="left:9px;top:494px">+20</div>
<div class="axl" style="left:9px;top:580px">+10</div>
<div class="axl" style="left:9px;top:667px">0dB</div>
<div class="axl" style="left:8px;top:757px">-10</div>
<div class="axl" style="left:8px;top:840px">-20</div>
<div class="axl" style="left:19px;top:858px;width:60px;text-align:center">20</div>
<div class="axl" style="left:219px;top:858px;width:60px;text-align:center">50</div>
<div class="axl" style="left:376px;top:858px;width:60px;text-align:center">100</div>
<div class="axl" style="left:531px;top:858px;width:60px;text-align:center">200</div>
<div class="axl" style="left:735px;top:858px;width:60px;text-align:center">500</div>
<div class="axl" style="left:889px;top:858px;width:60px;text-align:center">1K</div>
<div class="axl" style="left:1044px;top:858px;width:60px;text-align:center">2K</div>
<div class="axl" style="left:1248px;top:858px;width:60px;text-align:center">5K</div>
<div class="axl" style="left:1403px;top:858px;width:60px;text-align:center">10K</div>
<div class="axl" style="left:1554px;top:858px;width:60px;text-align:center">20K</div>
<div class="mk" style="left:114.5px;top:670px;width:40px;text-align:center">1</div>
<div class="mk" style="left:228.5px;top:670px;width:40px;text-align:center">2</div>
<div class="mk" style="left:383.3px;top:670px;width:40px;text-align:center">3</div>
<div class="mk" style="left:538.0px;top:670px;width:40px;text-align:center">4</div>
<div class="mk" style="left:742.5px;top:670px;width:40px;text-align:center">5</div>
<div class="mk" style="left:897.3px;top:670px;width:40px;text-align:center">6</div>
<div class="mk" style="left:1052.0px;top:670px;width:40px;text-align:center">7</div>
<div class="mk" style="left:1256.5px;top:670px;width:40px;text-align:center">8</div>
<div class="mk" style="left:1411.3px;top:670px;width:40px;text-align:center">9</div>
<div class="mk" style="left:1501.8px;top:670px;width:40px;text-align:center">10</div>
<div class="mk" style="left:1441px;top:714px;letter-spacing:0.8px">EQ10</div>
<div class="mk" style="left:1346px;top:734px;white-space:pre;letter-spacing:0.95px">F:15000Hz  Q:3.889  G:0.0dB</div>
</body></html>
